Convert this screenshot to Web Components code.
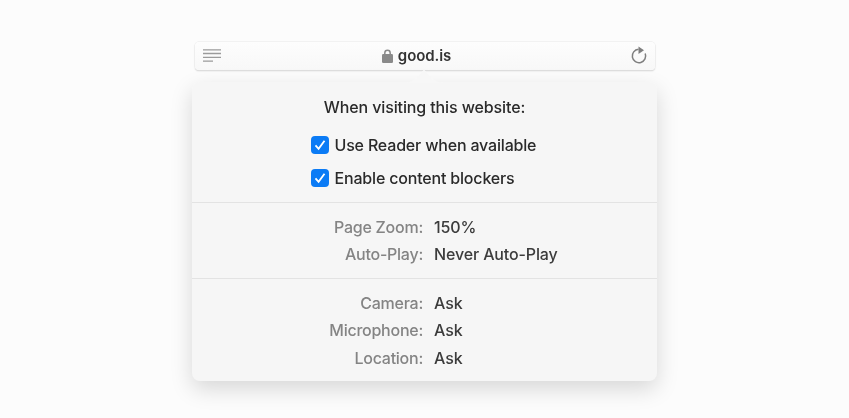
<!DOCTYPE html>
<html><head><meta charset="utf-8"><style>
html,body{margin:0;height:100%;background:#fcfcfc;overflow:hidden}
body{font-family:Inter,"Liberation Sans",sans-serif;-webkit-font-smoothing:antialiased}
</style></head><body>
<safari-scene>
<address-bar slot="bar"></address-bar>
<settings-popover>
<popover-section first>
<div class="t" style="font:500 16px/20px Inter,sans-serif;letter-spacing:-.12px;color:#2a2a2a;text-align:center;margin-bottom:11px">When visiting this website:</div>
<check-row>Use Reader when available</check-row>
<check-row>Enable content blockers</check-row>
</popover-section>
<popover-section>
<setting-row label="Page Zoom:">150%</setting-row>
<setting-row label="Auto-Play:">Never Auto-Play</setting-row>
</popover-section>
<popover-section>
<setting-row label="Camera:">Ask</setting-row>
<setting-row label="Microphone:">Ask</setting-row>
<setting-row label="Location:">Ask</setting-row>
</popover-section>
</settings-popover>
</safari-scene>
<script>
function def(name,html){customElements.define(name,class extends HTMLElement{constructor(){super();this.attachShadow({mode:'open'}).innerHTML=typeof html==='function'?html(this):html;}});}
def('safari-scene',`<style>:host{display:flex;flex-direction:column;align-items:center;padding-top:42px;filter:blur(.35px)}
::slotted(address-bar){margin-bottom:12.5px}</style><slot name="bar"></slot><slot></slot>`);
def('address-bar',`<style>
:host{display:flex;box-sizing:border-box;width:460px;height:27.5px;align-items:center;justify-content:space-between;padding:0 5.5px 0 8.5px;border-radius:4px;
background:linear-gradient(#fdfdfd,#f8f8f8);box-shadow:0 0 0 .5px #e9e9e9,0 1px 1.5px #c9c9c9;position:relative}
.c{display:flex;align-items:center;gap:5px;margin-right:17px;font:600 15px/20px Inter,sans-serif;letter-spacing:-.1px;color:#333}
svg{display:block}
</style>
<svg width="18" height="14" viewBox="0 0 18 14" fill="none" stroke="#9b9b9b" stroke-width="1.3"><path d="M0 .8H18M0 4.500H18M0 8.300H18M0 12.100H10"/></svg>
<div class="c"><svg width="11" height="14" viewBox="0 0 11 14"><path fill="none" stroke="#8a8a8a" stroke-width="1.500" d="M2.800 6V4a2.700 2.700 0 0 1 5.400 0v2"/><rect y="5" width="11" height="9" rx="1.200" fill="#8a8a8a"/></svg><span>good.is</span></div>
<svg width="20" height="20" viewBox="0 0 20 20" fill="none"><path d="M9.500 3.300A6.700 6.700 0 1 0 16.200 7.500" stroke="#7f7f7f" stroke-width="1.500"/><path d="M9.500 .5L15 4.300L9.500 8z" fill="#7f7f7f"/></svg>`);
def('settings-popover',`<style>:host{display:block;box-sizing:border-box;width:465px;height:299px;background:#f6f6f6;border-radius:8px;box-shadow:0 8px 22px rgba(0,0,0,.15);position:relative}
.a{position:absolute;left:206px;top:-14px;display:block}</style>
<svg class="a" width="52" height="15" viewBox="0 0 52 15"><path d="M0 15C13 15 16 13 19 9.500L26 1.500L33 9.500C36 13 39 15 52 15z" fill="#f7f7f7"/></svg><slot></slot>`);
def('popover-section',`<style>
:host{display:block;box-sizing:border-box;border-top:1.5px solid #e3e3e3;padding:10.5px 0 9.5px}
:host([first]){border-top:0;padding:15px 0 7.5px}</style><slot></slot>`);
def('check-row',`<style>:host{display:flex;align-items:center;gap:5.5px;height:33px;padding-left:119px;font:500 16px/20px Inter,sans-serif;letter-spacing:-.18px;color:#2a2a2a}
svg{display:block}</style>
<svg width="18" height="18" viewBox="0 0 18 18"><rect width="18" height="18" rx="4" fill="#0b7bf5"/><path d="M4.500 9.300L7.600 12.800L13.500 4.800" fill="none" stroke="#fff" stroke-width="1.800"/></svg><span><slot></slot></span>`);
def('setting-row',el=>`<style>
:host{display:grid;grid-template-columns:231px auto;column-gap:11px;height:27.5px;align-items:center;font:450 16px/20px Inter,sans-serif;letter-spacing:-.13px;color:#3c3c3c}
.l{text-align:right;color:#848484;letter-spacing:-.25px}</style><span class="l">${el.getAttribute('label')}</span><span><slot></slot></span>`);
</script>
</body></html>
